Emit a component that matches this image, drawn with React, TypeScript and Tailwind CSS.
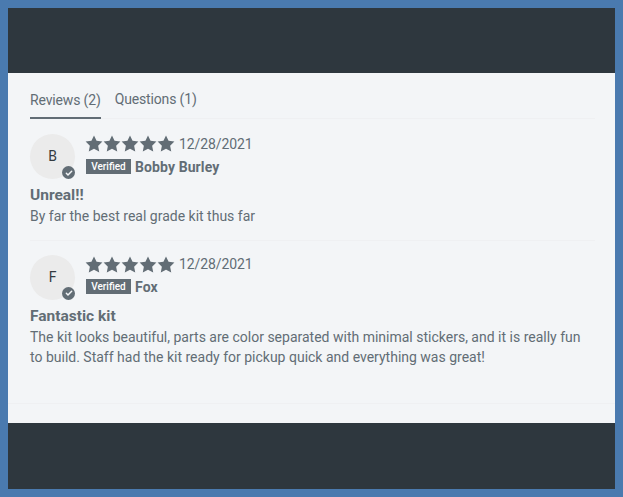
import React from 'react';

const STAR = 'M12 .8l3.4 7 7.8 1-5.7 5.4 1.5 7.8L12 18.2l-7 3.8 1.5-7.8L.8 8.8l7.8-1z';

const REVIEWS = [
  {
    initial: 'B',
    date: '12/28/2021',
    name: 'Bobby Burley',
    title: 'Unreal!!',
    body: ['By far the best real grade kit thus far'],
  },
  {
    initial: 'F',
    date: '12/28/2021',
    name: 'Fox',
    title: 'Fantastic kit',
    body: [
      'The kit looks beautiful, parts are color separated with minimal stickers, and it is really fun',
      'to build. Staff had the kit ready for pickup quick and everything was great!',
    ],
  },
];

function Stars() {
  return (
    <div className="flex">
      {[0, 1, 2, 3, 4].map((i) => (
        <svg key={i} width="18" height="18" viewBox="0 0 24 24" className="fill-[#626d75]">
          <path d={STAR} />
        </svg>
      ))}
    </div>
  );
}

function Review({ review, last }: { review: (typeof REVIEWS)[number]; last: boolean }) {
  return (
    <div className={last ? 'pt-[14px]' : 'pt-[14px] pb-[13px] border-b border-[#eff0f2]'}>
      <div className="flex h-[46px]">
        <div className="relative w-[45px] h-[45px] rounded-full bg-[#ebebeb] flex items-center justify-center text-[14px] text-[#333a40] shrink-0">
          {review.initial}
          <div className="absolute right-0 bottom-0 w-[13px] h-[13px] rounded-full bg-[#626d75] flex items-center justify-center">
            <svg width="8" height="8" viewBox="0 0 24 24" fill="none" stroke="#f3f5f7" strokeWidth="4.5" strokeLinecap="round" strokeLinejoin="round">
              <path d="M4 13l5 5L20 7" />
            </svg>
          </div>
        </div>
        <div className="ml-[10px]">
          <div className="flex items-center h-[20px]">
            <Stars />
            <span className="ml-[4px] text-[14px] tracking-[-0.1px] text-[#626d75]">{review.date}</span>
          </div>
          <div className="flex items-center mt-[3px] ml-[1px] h-[20px]">
            <span className="w-[45px] h-[15px] mb-[2px] bg-[#626d75] text-white font-medium text-[10px] leading-[15px] text-center">Verified</span>
            <span className="ml-[4px] text-[14px] font-bold tracking-[0.1px] text-[#626d75]">{review.name}</span>
          </div>
        </div>
      </div>
      <div className="mt-[4px] text-[15.5px] leading-[22px] font-bold text-[#626d75]">{review.title}</div>
      <div className="text-[14px] leading-[20.5px] text-[#626d75]">
        {review.body.map((line) => (
          <div key={line} className="whitespace-nowrap">{line}</div>
        ))}
      </div>
    </div>
  );
}

export default function App() {
  return (
    <div className="w-[623px] h-[497px] bg-[#4a7aaf] p-[8px] font-['Roboto',sans-serif] overflow-hidden">
      <div className="flex flex-col h-full">
        <div className="h-[65px] bg-[#2e373e]" />
        <div className="flex-1 bg-[#f3f5f7] flex flex-col">
          <div className="flex-1 pl-[22px] pr-[20px]">
            <div className="flex gap-[14px] h-[46px] items-end border-b border-[#eff0f2] text-[14px] tracking-[-0.15px] text-[#626d75]">
              <div className="h-[36px] pt-[7px] border-b-2 border-[#626d75] mb-[-1px]">Reviews (2)</div>
              <div className="h-[36px] pt-[7px]">Questions (1)</div>
            </div>
            <div className="mt-[1px]">
              {REVIEWS.map((r, i) => (
                <Review key={r.initial} review={r} last={i === REVIEWS.length - 1} />
              ))}
            </div>
          </div>
          <div className="h-[20px] border-t border-[#eff0f2]" />
        </div>
        <div className="h-[66px] bg-[#2e373e]" />
      </div>
    </div>
  );
}
